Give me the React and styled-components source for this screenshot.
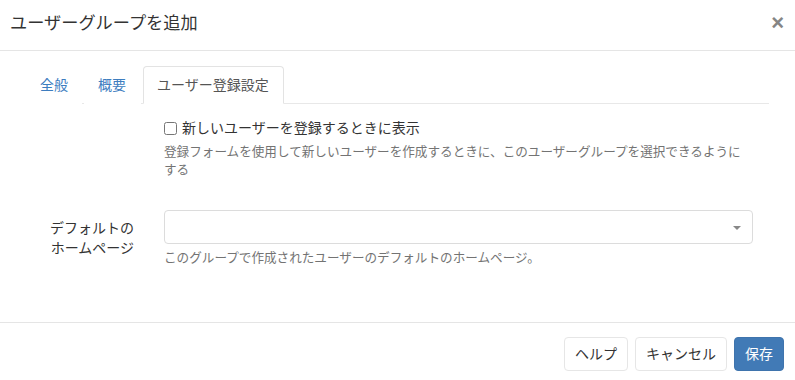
import styled, { createGlobalStyle } from "styled-components";

const Global = createGlobalStyle`
  html, body {
    margin: 0;
    background: #fff;
  }
  body {
    font-family: "Liberation Sans", "Noto Sans CJK JP", sans-serif;
    font-size: 14px;
    line-height: 1.42857;
    color: #333;
  }
`;

export default function App() {
  return (
    <Modal>
      <Global />
      <Header>
        <Title>ユーザーグループを追加</Title>
        <Close type="button">×</Close>
      </Header>
      <Body>
        <Tabs>
          <Tab>全般</Tab>
          <Tab>概要</Tab>
          <Tab active>ユーザー登録設定</Tab>
        </Tabs>
        <Panel>
          <Label />
          <Field>
            <CheckRow>
              <Check type="checkbox" />
              <span>新しいユーザーを登録するときに表示</span>
            </CheckRow>
            <Help>
              登録フォームを使用して新しいユーザーを作成するときに、このユーザーグループを選択できるようにする
            </Help>
          </Field>
          <Label spaced>
            デフォルトの
            <br />
            ホームページ
          </Label>
          <Field spaced>
            <Select>
              <Caret />
            </Select>
            <Help>このグループで作成されたユーザーのデフォルトのホームページ。</Help>
          </Field>
        </Panel>
      </Body>
      <Footer>
        <Button>ヘルプ</Button>
        <Button>キャンセル</Button>
        <Button primary>保存</Button>
      </Footer>
    </Modal>
  );
}

const Modal = styled.div`
  width: 795px;
  background: #fff;
`;

const Header = styled.div`
  display: flex;
  align-items: center;
  justify-content: space-between;
  padding: 10px 10px 14px;
  border-bottom: 1px solid #e5e5e5;
`;

const Title = styled.h4`
  margin: 0;
  font-size: 17.2px;
  font-weight: normal;
  line-height: 26px;
  color: #333;
`;

const Close = styled.button`
  border: 0;
  background: none;
  padding: 0;
  margin-right: 1px;
  font-family: "Liberation Sans", sans-serif;
  font-size: 22px;
  font-weight: bold;
  line-height: 1;
  color: #858585;
  cursor: pointer;
`;

const Body = styled.div`
  padding: 15px 26px 55px 24px;
`;

const Tabs = styled.ul`
  display: flex;
  margin: 0;
  padding: 0;
  list-style: none;
  border-bottom: 1px solid #e8e8e8;
`;

const Tab = styled.li`
  margin: 0 2px -1px 0;
  padding: 8px 14px 8px 13px;
  line-height: 20px;
  border: 1px solid ${(p) => (p.active ? "#e3e3e3" : "transparent")};
  border-bottom-color: ${(p) => (p.active ? "#fff" : "transparent")};
  border-radius: 4px 4px 0 0;
  background: #fff;
  color: ${(p) => (p.active ? "#555" : "#3d7dbf")};
  cursor: pointer;
  &:first-child {
    padding-left: 15px;
    padding-right: 13px;
  }
`;

const Panel = styled.div`
  display: grid;
  grid-template-columns: 110px 589px;
  column-gap: 30px;
  padding-top: 14px;
`;

const Label = styled.label`
  margin-top: ${(p) => (p.spaced ? "31px" : "0")};
  padding-top: ${(p) => (p.spaced ? "8px" : "0")};
  text-align: right;
  line-height: 20px;
  color: #333;
`;

const Field = styled.div`
  margin-top: ${(p) => (p.spaced ? "31px" : "0")};
`;

const CheckRow = styled.label`
  display: flex;
  align-items: center;
  gap: 5px;
  line-height: 20px;
`;

const Check = styled.input`
  width: 13px;
  height: 13px;
  margin: 0;
`;

const Help = styled.p`
  margin: 5px 0 0;
  font-size: 12.6px;
  line-height: 18px;
  color: #737373;
`;

const Select = styled.div`
  position: relative;
  height: 34px;
  box-sizing: border-box;
  border: 1px solid #dcdcdc;
  border-radius: 4px;
  background: #fff;
`;

const Caret = styled.span`
  position: absolute;
  right: 11px;
  top: 15px;
  width: 0;
  height: 0;
  border-left: 4px solid transparent;
  border-right: 4px solid transparent;
  border-top: 4px solid #888;
`;

const Footer = styled.div`
  display: flex;
  justify-content: flex-end;
  gap: 7px;
  padding: 14px 11px 15px;
  border-top: 1px solid #e5e5e5;
`;

const Button = styled.button`
  height: 34px;
  padding: 0 10px;
  font-family: inherit;
  font-size: 14px;
  line-height: 20px;
  border-radius: 4px;
  border: 1px solid ${(p) => (p.primary ? "#3f74ad" : "#e6e6e6")};
  background: ${(p) => (p.primary ? "#417ab6" : "#fff")};
  color: ${(p) => (p.primary ? "#fff" : "#333")};
  cursor: pointer;
`;
